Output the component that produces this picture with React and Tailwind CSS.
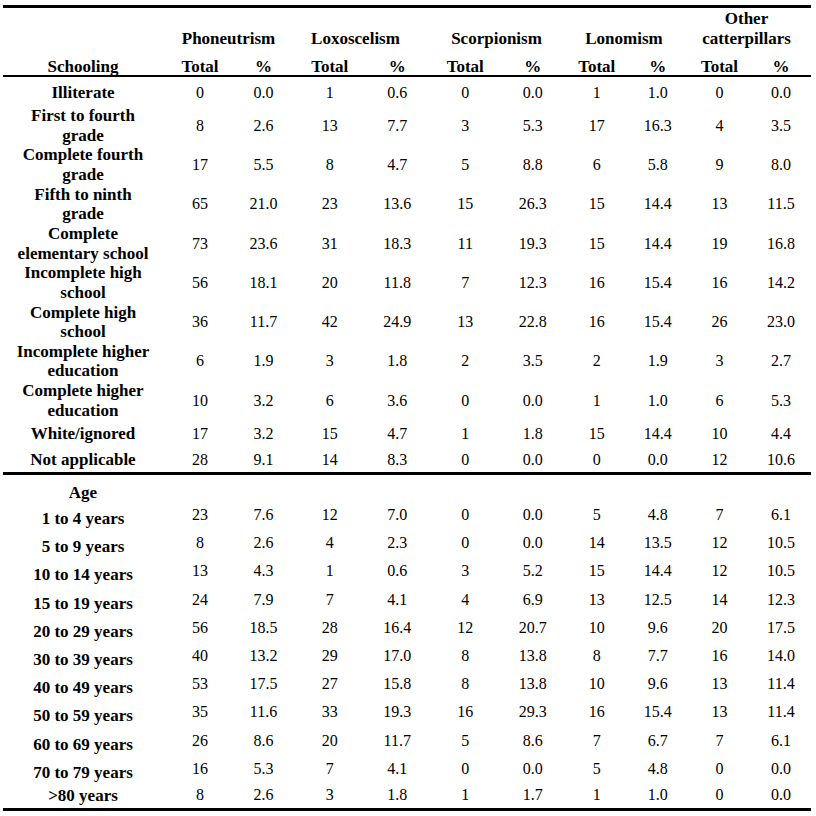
const schooling = [
  { label: ["Illiterate"], h: "h-[29px]", v: ["0", "0.0", "1", "0.6", "0", "0.0", "1", "1.0", "0", "0.0"] },
  { label: ["First to fourth", "grade"], h: "h-[39.3px]", v: ["8", "2.6", "13", "7.7", "3", "5.3", "17", "16.3", "4", "3.5"] },
  { label: ["Complete fourth", "grade"], h: "h-[39.3px]", v: ["17", "5.5", "8", "4.7", "5", "8.8", "6", "5.8", "9", "8.0"] },
  { label: ["Fifth to ninth", "grade"], h: "h-[39.3px]", v: ["65", "21.0", "23", "13.6", "15", "26.3", "15", "14.4", "13", "11.5"] },
  { label: ["Complete", "elementary school"], h: "h-[39.3px]", v: ["73", "23.6", "31", "18.3", "11", "19.3", "15", "14.4", "19", "16.8"] },
  { label: ["Incomplete high", "school"], h: "h-[39.3px]", v: ["56", "18.1", "20", "11.8", "7", "12.3", "16", "15.4", "16", "14.2"] },
  { label: ["Complete high", "school"], h: "h-[39.3px]", v: ["36", "11.7", "42", "24.9", "13", "22.8", "16", "15.4", "26", "23.0"] },
  { label: ["Incomplete higher", "education"], h: "h-[39.3px]", v: ["6", "1.9", "3", "1.8", "2", "3.5", "2", "1.9", "3", "2.7"] },
  { label: ["Complete higher", "education"], h: "h-[39.3px]", v: ["10", "3.2", "6", "3.6", "0", "0.0", "1", "1.0", "6", "5.3"] },
  { label: ["White/ignored"], h: "h-[27.6px]", v: ["17", "3.2", "15", "4.7", "1", "1.8", "15", "14.4", "10", "4.4"] },
  { label: ["Not applicable"], h: "h-[24px]", v: ["28", "9.1", "14", "8.3", "0", "0.0", "0", "0.0", "12", "10.6"] },
];

const ages = [
  ["1 to 4 years", "23", "7.6", "12", "7.0", "0", "0.0", "5", "4.8", "7", "6.1"],
  ["5 to 9 years", "8", "2.6", "4", "2.3", "0", "0.0", "14", "13.5", "12", "10.5"],
  ["10 to 14 years", "13", "4.3", "1", "0.6", "3", "5.2", "15", "14.4", "12", "10.5"],
  ["15 to 19 years", "24", "7.9", "7", "4.1", "4", "6.9", "13", "12.5", "14", "12.3"],
  ["20 to 29 years", "56", "18.5", "28", "16.4", "12", "20.7", "10", "9.6", "20", "17.5"],
  ["30 to 39 years", "40", "13.2", "29", "17.0", "8", "13.8", "8", "7.7", "16", "14.0"],
  ["40 to 49 years", "53", "17.5", "27", "15.8", "8", "13.8", "10", "9.6", "13", "11.4"],
  ["50 to 59 years", "35", "11.6", "33", "19.3", "16", "29.3", "16", "15.4", "13", "11.4"],
  ["60 to 69 years", "26", "8.6", "20", "11.7", "5", "8.6", "7", "6.7", "7", "6.1"],
  ["70 to 79 years", "16", "5.3", "7", "4.1", "0", "0.0", "5", "4.8", "0", "0.0"],
];

const last = [">80 years", "8", "2.6", "3", "1.8", "1", "1.7", "1", "1.0", "0", "0.0"];

const numCell = "p-0 text-center align-middle text-[16px] leading-[20px]";
const labelCell = "p-0 pr-[6px] text-center font-bold text-[17px]";

export default function App() {
  return (
    <div className="min-h-screen bg-white pt-[5px] pl-[3px] text-black" style={{ fontFamily: '"Liberation Serif", "Times New Roman", serif' }}>
      <table className="w-[808px] table-fixed border-separate border-spacing-0">
        <colgroup>
          <col className="w-[166px]" />
          <col className="w-[62px]" />
          <col className="w-[65px]" />
          <col className="w-[67.5px]" />
          <col className="w-[67.5px]" />
          <col className="w-[68.5px]" />
          <col className="w-[66.5px]" />
          <col className="w-[61.5px]" />
          <col className="w-[60.5px]" />
          <col className="w-[63px]" />
          <col className="w-[60px]" />
        </colgroup>
        <thead>
          {/* group headers */}
          <tr className="h-[45px]">
            <th rowSpan={2} className="border-t-[3px] border-b-2 border-black p-0 pr-[6px] text-center align-bottom font-bold text-[17px] leading-[16px]">
              Schooling
            </th>
            <th colSpan={2} className="border-t-[3px] border-black p-0 pr-[8px] pb-[1px] align-bottom font-bold text-[17px] leading-[20px]">
              Phoneutrism
            </th>
            <th colSpan={2} className="border-t-[3px] border-black p-0 pr-[16px] pb-[1px] align-bottom font-bold text-[17px] leading-[20px]">
              Loxoscelism
            </th>
            <th colSpan={2} className="border-t-[3px] border-black p-0 pr-[4px] pb-[1px] align-bottom font-bold text-[17px] leading-[20px]">
              Scorpionism
            </th>
            <th colSpan={2} className="border-t-[3px] border-black p-0 pr-[6px] pb-[1px] align-bottom font-bold text-[17px] leading-[20px]">
              Lonomism
            </th>
            <th colSpan={2} className="border-t-[3px] border-black p-0 pr-[6px] pb-[1px] align-bottom font-bold text-[17px] leading-[20px]">
              Other
              <br />
              catterpillars
            </th>
          </tr>
          <tr className="h-[27px]">
            {["Total", "%", "Total", "%", "Total", "%", "Total", "%", "Total", "%"].map((t, i) => (
              <th key={i} className="border-b-2 border-black p-0 text-center align-bottom font-bold text-[17px] leading-[16px]">
                {t}
              </th>
            ))}
          </tr>
        </thead>
        <tbody>
          {schooling.map((row, r) => (
            <tr key={row.label.join(" ")} className={row.h}>
              <td className={`${labelCell} ${r === 0 ? "pt-[3px]" : ""} align-middle leading-[19.5px]`}>
                {row.label.map((l, i) => (
                  <div key={i}>{l}</div>
                ))}
              </td>
              {row.v.map((n, i) => (
                <td key={i} className={`${numCell} ${r === 0 ? "pt-[3px]" : ""}`}>
                  {n}
                </td>
              ))}
            </tr>
          ))}

          {/* Age section */}
          <tr className="h-[29px]">
            <td className="border-t-[3px] border-black p-0 pr-[6px] text-center align-bottom font-bold text-[17px] leading-[16px]">
              Age
            </td>
            {Array.from({ length: 10 }).map((_, i) => (
              <td key={i} className="border-t-[3px] border-black p-0"></td>
            ))}
          </tr>
          {ages.map((row) => (
            <tr key={row[0]} className="h-[28.2px]">
              <td className={`${labelCell} pt-[8px] align-middle leading-[20px]`}>{row[0]}</td>
              {row.slice(1).map((n, i) => (
                <td key={i} className={numCell}>
                  {n}
                </td>
              ))}
            </tr>
          ))}
          <tr className="h-[28px]">
            <td className={`${labelCell} border-b-[3px] border-black pt-[2px] align-middle leading-[20px]`}>{last[0]}</td>
            {last.slice(1).map((n, i) => (
              <td key={i} className={`${numCell} border-b-[3px] border-black`}>
                {n}
              </td>
            ))}
          </tr>
        </tbody>
      </table>
    </div>
  );
}
